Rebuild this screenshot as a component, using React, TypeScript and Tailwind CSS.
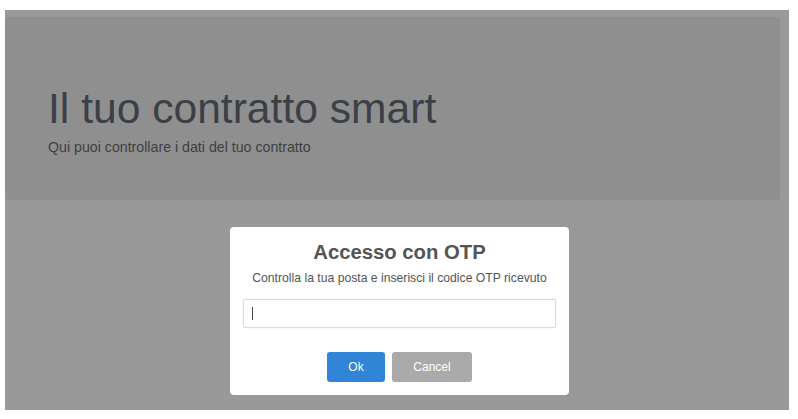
import React from "react";

export default function App() {
  return (
    <div
      className="w-[798px] h-[419px] bg-white pt-[10px] pl-[5px] pr-[9px] pb-[9px]"
      style={{ fontFamily: '"Liberation Sans", Arial, sans-serif' }}
    >
      <div className="h-[400px] bg-[#999999] pt-[7px] flex flex-col">
        <div className="mr-[9px] h-[183px] rounded-[4px] bg-[#8f8f8f] pl-[43px] pt-[66px]">
          <h1 className="text-[42.6px] leading-[50px] font-normal text-[#3b4046]">
            Il tuo contratto smart
          </h1>
          <p className="mt-[4px] text-[14.2px] leading-[21px] text-[#3d3f42]">
            Qui puoi controllare i dati del tuo contratto
          </p>
        </div>
        <div className="flex justify-center pt-[27px] pl-[5px]">
          <div className="w-[339px] h-[168px] bg-white rounded-[4px] px-[13px] pt-[13px] pb-[13px] flex flex-col items-center">
            <h2 className="text-[20.3px] leading-[24px] font-bold text-[#545454]">
              Accesso con OTP
            </h2>
            <p className="mt-[6px] text-[12.2px] leading-[16px] text-[#545454]">
              Controlla la tua posta e inserisci il codice OTP ricevuto
            </p>
            <div className="mt-[13px] w-full h-[29px] border border-[#c6e0ec] rounded-[2px] shadow-[0_0_2px_#e3f0f6] flex items-center pl-[8px]">
              <span className="block w-px h-[13px] bg-[#444]" />
            </div>
            <div className="mt-[24px] flex gap-[7px]">
              <button className="w-[58px] h-[30px] rounded-[3px] bg-[#3085d6] text-white text-[12px]">
                Ok
              </button>
              <button className="w-[80px] h-[30px] rounded-[3px] bg-[#aaaaaa] text-white text-[12px]">
                Cancel
              </button>
            </div>
          </div>
        </div>
      </div>
    </div>
  );
}
